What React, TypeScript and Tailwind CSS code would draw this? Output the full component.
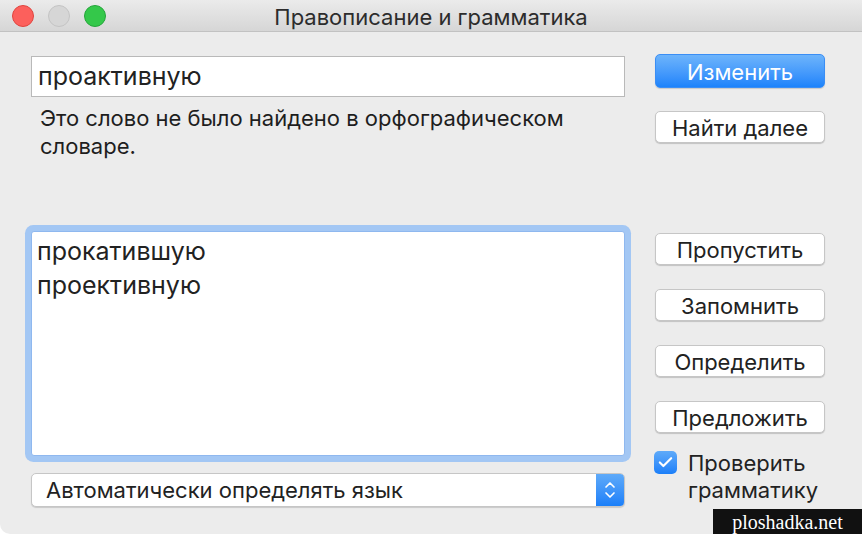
import { Check, ChevronUp, ChevronDown } from 'lucide-react';

const sans = "font-['Inter','Noto_Sans',sans-serif]";

function PushButton({ label }: { label: string }) {
  return (
    <button className="h-[32px] w-[170px] rounded-[5px] border border-[#c6c6c6] bg-white pt-[2px] text-[22px] leading-none text-[#222] shadow-[0_1px_1px_rgba(0,0,0,0.18)]">
      {label}
    </button>
  );
}

export default function App() {
  return (
    <div className={`relative h-[534px] w-[862px] overflow-hidden rounded-bl-[10px] bg-[#ececec] ${sans}`}>
      {/* Title bar */}
      <div className="relative flex h-[32px] items-center border-b border-[#c2c2c2] bg-gradient-to-b from-[#ebebeb] to-[#d6d6d6]">
        <div className="flex items-center gap-[14px] pl-[12px]">
          <span className="h-[22px] w-[22px] rounded-full border border-[#e0443e] bg-[#fc605c]" />
          <span className="h-[22px] w-[22px] rounded-full border border-[#c4c4c4] bg-[#d6d6d6]" />
          <span className="h-[22px] w-[22px] rounded-full border border-[#24a53a] bg-[#34c84a]" />
        </div>
        <div className="absolute inset-x-0 top-[1px] flex h-[32px] items-center justify-center text-[22px] text-[#2c2c2c]">
          Правописание и грамматика
        </div>
      </div>

      <div className="flex pl-[31px]">
        {/* Left column */}
        <div className="flex w-[594px] flex-col">
          <div className="mt-[24px] flex h-[41px] items-center border border-[#b9b9b9] bg-white pl-[6px] text-[25px] text-[#222]">
            проактивную
          </div>
          <p className="mt-[7px] pl-[9px] text-[22px] leading-[28px] text-[#1e1e1e]">
            Это слово не было найдено в орфографическом
            <br />
            словаре.
          </p>
          <div className="mt-[71px] h-[225px] rounded-[3px] border border-[#8fb8ef] bg-white pl-[5px] pt-[2px] text-[25px] leading-[34px] text-[#222] shadow-[0_0_0_6px_#a3c7f4]">
            <div>прокатившую</div>
            <div>проективную</div>
          </div>
          <div className="mt-[17px] flex h-[34px] items-stretch overflow-hidden rounded-[5px] border border-[#c6c6c6] bg-white shadow-[0_1px_1px_rgba(0,0,0,0.15)]">
            <div className="flex flex-1 items-center pl-[14px] pt-[1px] text-[22px] text-[#222]">
              Автоматически определять язык
            </div>
            <div className="flex w-[28px] flex-col items-center justify-center bg-gradient-to-b from-[#5eaaf9] to-[#1a7ff9] text-white">
              <ChevronUp size={16} strokeWidth={2.5} className="-mb-[3px]" />
              <ChevronDown size={16} strokeWidth={2.5} className="-mt-[3px]" />
            </div>
          </div>
        </div>

        {/* Right column */}
        <div className="ml-[30px] flex w-[170px] flex-col">
          <button className="mt-[22px] h-[34px] w-[170px] rounded-[5px] border border-[#3a8ef5] bg-gradient-to-b from-[#6db4fb] to-[#1c83fb] pt-[2px] text-[22px] leading-none text-white shadow-[0_1px_1px_rgba(0,0,0,0.15)]">
            Изменить
          </button>
          <div className="mt-[23px]">
            <PushButton label="Найти далее" />
          </div>
          <div className="mt-[90px] flex flex-col gap-[24px]">
            <PushButton label="Пропустить" />
            <PushButton label="Запомнить" />
            <PushButton label="Определить" />
            <PushButton label="Предложить" />
          </div>
          <div className="mt-[17px] flex">
            <span className="-ml-[1px] mt-[1px] flex h-[23px] w-[23px] items-center justify-center rounded-[5px] bg-gradient-to-b from-[#5eaaf9] to-[#1a7ff9] text-white">
              <Check size={17} strokeWidth={3} />
            </span>
            <div className="ml-[11px] text-[22px] leading-[27px] text-[#222]">
              Проверить
              <br />
              грамматику
            </div>
          </div>
        </div>
      </div>

      {/* Watermark */}
      <div className="absolute bottom-0 right-0 flex h-[25px] w-[149px] items-center justify-center bg-[#111] font-['Liberation_Serif',serif] text-[20px] text-white">
        ploshadka.net
      </div>
    </div>
  );
}
